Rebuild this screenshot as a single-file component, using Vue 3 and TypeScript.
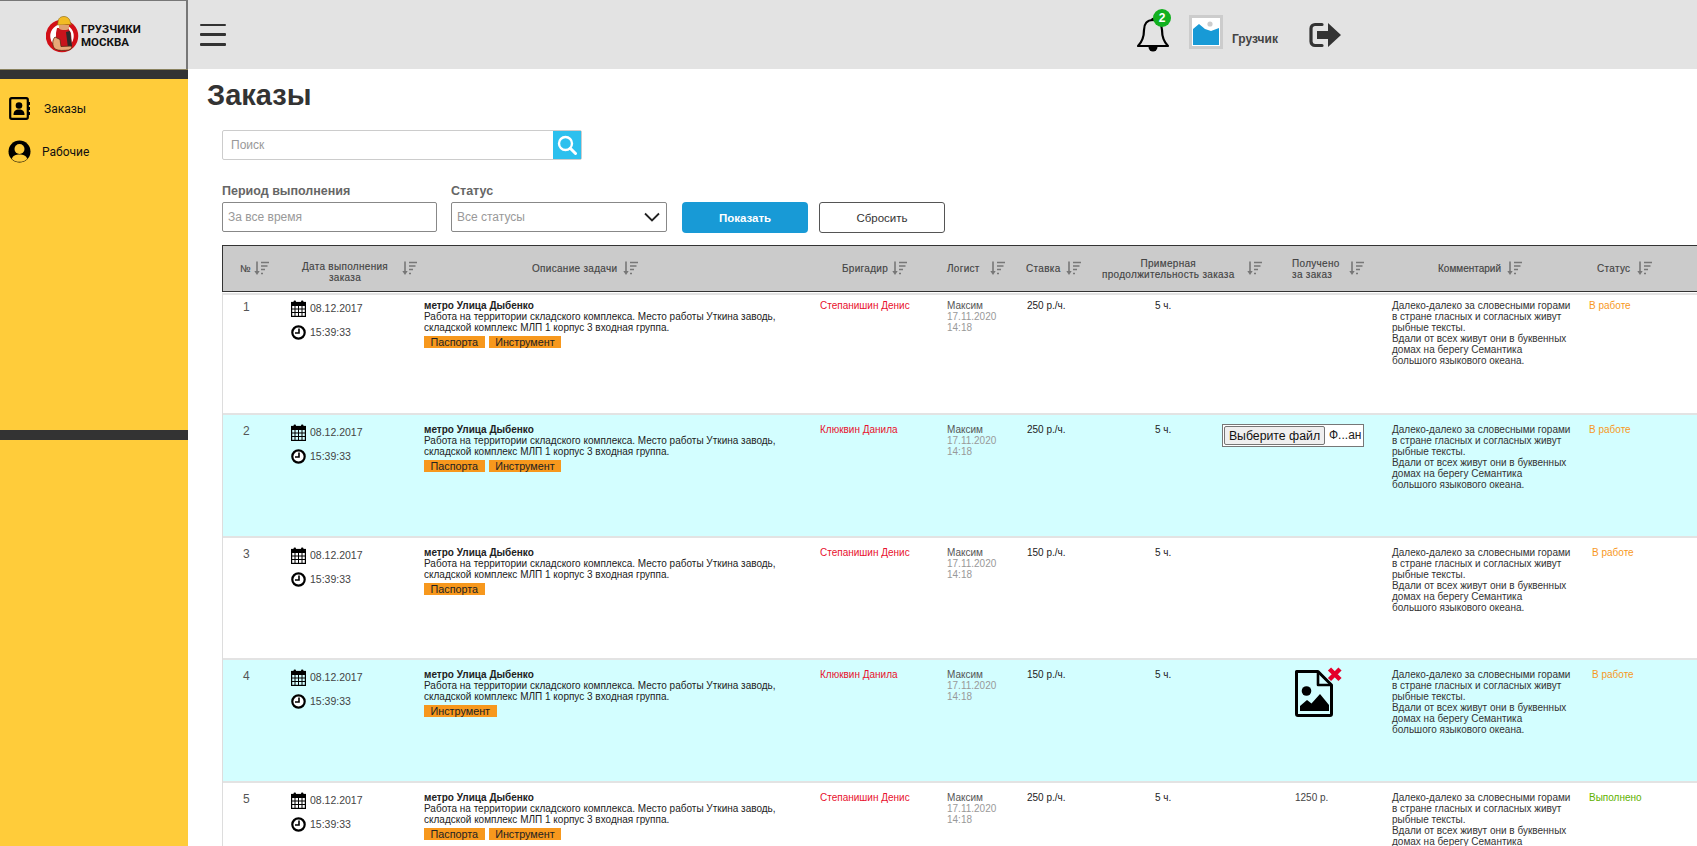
<script setup lang="ts">
interface Row {
  n: number
  tags: string[]
  boss: string
  rate: string
  dur: string
  statusText: string
  done: boolean
  shift: boolean
  kind: '' | 'input' | 'file' | 'paid'
}
const rows: Row[] = [
  { n: 1, tags: ['Паспорта', 'Инструмент'], boss: 'Степанишин Денис', rate: '250 р./ч.', dur: '5 ч.', statusText: 'В работе', done: false, shift: false, kind: '' },
  { n: 2, tags: ['Паспорта', 'Инструмент'], boss: 'Клюквин Данила', rate: '250 р./ч.', dur: '5 ч.', statusText: 'В работе', done: false, shift: false, kind: 'input' },
  { n: 3, tags: ['Паспорта'], boss: 'Степанишин Денис', rate: '150 р./ч.', dur: '5 ч.', statusText: 'В работе', done: false, shift: true, kind: '' },
  { n: 4, tags: ['Инструмент'], boss: 'Клюквин Данила', rate: '150 р./ч.', dur: '5 ч.', statusText: 'В работе', done: false, shift: true, kind: 'file' },
  { n: 5, tags: ['Паспорта', 'Инструмент'], boss: 'Степанишин Денис', rate: '250 р./ч.', dur: '5 ч.', statusText: 'Выполнено', done: true, shift: false, kind: 'paid' }
]
const heads = [
  { key: 'h-n', label: ['№'] },
  { key: 'h-date', label: ['Дата выполнения', 'заказа'] },
  { key: 'h-desc', label: ['Описание задачи'] },
  { key: 'h-boss', label: ['Бригадир'] },
  { key: 'h-log', label: ['Логист'] },
  { key: 'h-rate', label: ['Ставка'] },
  { key: 'h-dur', label: ['Примерная', 'продолжительность заказа'] },
  { key: 'h-got', label: ['Получено', 'за заказ'] },
  { key: 'h-com', label: ['Комментарий'] },
  { key: 'h-st', label: ['Статус'] }
]
const comment = [
  'Далеко-далеко за словесными горами',
  'в стране гласных и согласных живут',
  'рыбные тексты.',
  'Вдали от всех живут они в буквенных',
  'домах на берегу Семантика',
  'большого языкового океана.'
]
</script>

<template>
  <div class="page">
    <header class="top">
      <div class="logo">
        <svg class="logo-mark" viewBox="0 0 34 38" width="34" height="38">
          <circle cx="16" cy="21" r="14" fill="#fff" stroke="#d20f17" stroke-width="4.500" />
          <path d="M11 13h11l3 5 1 13-3 2H13l-3-4 0-11z" fill="#c8141c" />
          <path d="M20 17l4-1 2 15-4 2z" fill="#2b2b2b" />
          <path d="M12 7.500C12 3 15 1.500 18 1.500s6 2 6.500 6.500l1 1.500-14 .5z" fill="#f2bb24" stroke="#8a6510" stroke-width=".6" />
          <path d="M13 10h10v3.500c-1 2-8 2-10 0z" fill="#e0a070" />
          <path d="M9 22c-3 3-3 9 0 12 4 2 9 1.500 14 1l3-2-1-2-10 .5-1-7z" fill="#e7a878" stroke="#5a2a12" stroke-width=".8" />
        </svg>
        <div class="logo-text"><span>ГРУЗЧИКИ</span><span>МОСКВА</span></div>
      </div>
      <button class="burger" aria-label="Меню"><i></i><i></i><i></i></button>
      <div class="top-right">
        <div class="bell">
          <svg viewBox="0 0 34 36" width="34" height="36">
            <path d="M17 4c-6 0-9 4-9 10 0 8-2 12-6 16h30c-4-4-6-8-6-16 0-6-3-10-9-10z" fill="none" stroke="#000" stroke-width="2.200" stroke-linejoin="round" />
            <circle cx="17" cy="3.500" r="1.800" fill="#000" />
            <path d="M12.500 31a4.500 4.500 0 0 0 9 0z" fill="#000" />
          </svg>
          <span class="badge">2</span>
        </div>
        <div class="avatar">
          <svg viewBox="0 0 28 28" width="28" height="28">
            <rect width="28" height="28" fill="#fff" />
            <circle cx="18" cy="6" r="2.600" fill="#ccc" />
            <path d="M1 11l6-5 6 5 6 2 8-3v17H1z" fill="#189ad6" />
          </svg>
        </div>
        <span class="who">Грузчик</span>
        <svg class="exit" viewBox="0 0 33 26" width="33" height="26">
          <path d="M13 2.500H6a4 4 0 0 0-4 4v13a4 4 0 0 0 4 4h7" fill="none" stroke="#333" stroke-width="3.200" stroke-linecap="round" />
          <path d="M8 9h11V1l13 12-13 12v-8H8z" fill="#333" />
        </svg>
      </div>
    </header>

    <div class="below">
      <aside class="side">
        <div class="strip"></div>
        <nav class="nav">
          <a class="nav-item">
            <svg viewBox="0 0 22 23" width="22" height="23">
              <rect x="1.200" y="1.200" width="17.600" height="20.600" rx="1.500" fill="none" stroke="#000" stroke-width="2.200" />
              <path d="M20 5v3M20 10v3M20 15v3" stroke="#000" stroke-width="2" />
              <circle cx="10" cy="8.500" r="3.300" />
              <path d="M4.500 18c0-4 2-5.500 5.500-5.500s5.500 1.500 5.500 5.500z" />
            </svg>
            <span class="nav-a">Заказы</span>
          </a>
          <a class="nav-item nav-item-2">
            <svg viewBox="0 0 23 23" width="23" height="23">
              <circle cx="11.500" cy="11.500" r="11" />
              <circle cx="11.500" cy="9" r="5" fill="#ffcc3a" />
              <path d="M3.800 19c1-3.500 4-4.500 7.700-4.500s6.700 1 7.700 4.500c-2 2-4.700 2.800-7.700 2.800S5.800 21 3.800 19z" fill="#ffcc3a" />
            </svg>
            <span class="nav-b">Рабочие</span>
          </a>
        </nav>
        <div class="strip strip-2"></div>
      </aside>

      <main class="content">
        <h1 class="title">Заказы</h1>
        <div class="search">
          <input class="search-in" placeholder="Поиск" />
          <button class="search-btn" aria-label="Найти">
            <svg viewBox="0 0 20 20" width="20" height="20">
              <circle cx="8.500" cy="8.500" r="6.500" fill="none" stroke="#fff" stroke-width="2.400" />
              <path d="M13.500 13.500l5 5" stroke="#fff" stroke-width="3" stroke-linecap="round" />
            </svg>
          </button>
        </div>
        <div class="filters">
          <label class="field f-period">
            <span class="f-label">Период выполнения</span>
            <input class="f-in" placeholder="За все время" />
          </label>
          <label class="field f-status">
            <span class="f-label">Статус</span>
            <span class="f-in f-sel">Все статусы
              <svg viewBox="0 0 16 10" width="16" height="10"><path d="M1 1.500l7 7 7-7" fill="none" stroke="#222" stroke-width="1.800" /></svg>
            </span>
          </label>
          <button class="btn-show">Показать</button>
          <button class="btn-reset">Сбросить</button>
        </div>

        <section class="table">
          <div class="thead">
            <div v-for="h in heads" :key="h.key" class="th" :class="h.key">
              <div class="th-text"><div v-for="l in h.label" :key="l">{{ l }}</div></div>
              <svg class="sort" viewBox="0 0 15 15" width="15" height="15">
                <path d="M3 0.500v11" stroke="#777" stroke-width="1.600" />
                <path d="M0.300 10h5.400L3 14z" fill="#777" />
                <path d="M7 1.500h8M7 5h6.500M7 8.500h4M7 12.500h2" stroke="#777" stroke-width="1.500" />
              </svg>
            </div>
          </div>
          <div class="rows">
            <article v-for="r in rows" :key="r.n" class="row" :class="{ alt: r.n % 2 === 0 }">
              <div class="c-n">{{ r.n }}</div>
              <div class="c-date">
                <div class="stamp">
                  <svg viewBox="0 0 15 17" width="15" height="17">
                    <rect x=".6" y="2.500" width="13.800" height="13.900" fill="none" stroke="#000" stroke-width="1.200" />
                    <rect x=".6" y="2.500" width="13.800" height="3.500" />
                    <path d="M.6 9h13.800M.6 12.500h13.800M4 6v10M7.500 6v10M11 6v10" stroke="#000" stroke-width="1" />
                    <rect x="2.600" y=".4" width="2.400" height="4" rx="1" />
                    <rect x="10" y=".4" width="2.400" height="4" rx="1" />
                  </svg>
                  <span>08.12.2017</span>
                </div>
                <div class="stamp stamp-2">
                  <svg viewBox="0 0 15 15" width="15" height="15">
                    <circle cx="7.500" cy="7.500" r="6.200" fill="#fff" stroke="#000" stroke-width="2.200" />
                    <path d="M8 3.500v4.500H4" fill="none" stroke="#000" stroke-width="1.600" />
                  </svg>
                  <span>15:39:33</span>
                </div>
              </div>
              <div class="c-desc">
                <div class="d-title">метро Улица Дыбенко</div>
                <div>Работа на территории складского комплекса. Место работы Уткина заводь,</div>
                <div>складской комплекс МЛП 1 корпус 3 входная группа.</div>
                <div class="tags"><span v-for="t in r.tags" :key="t" class="tag">{{ t }}</span></div>
              </div>
              <div class="c-boss">{{ r.boss }}</div>
              <div class="c-log">Максим<div class="muted">17.11.2020</div><div class="muted">14:18</div></div>
              <div class="c-rate">{{ r.rate }}</div>
              <div class="c-dur">{{ r.dur }}</div>
              <div class="c-got">
                <div v-if="r.kind === 'input'" class="file-in">
                  <button class="file-btn">Выберите файл</button><span>Ф...ан</span>
                </div>
                <div v-else-if="r.kind === 'file'" class="file-ic">
                  <svg viewBox="0 0 54 54" width="54" height="54">
                    <path d="M6.500 6.500h21.500l13.500 13.500v29a1.500 1.500 0 0 1-1.500 1.500H8a1.500 1.500 0 0 1-1.500-1.500z" fill="none" stroke="#000" stroke-width="3" stroke-linejoin="round" />
                    <path d="M28 6.500v13.500h13.500" fill="none" stroke="#000" stroke-width="2.600" stroke-linejoin="round" />
                    <circle cx="16.500" cy="26" r="4.800" />
                    <path d="M10 46v-5l7-6 4.500 3.500L30 29l9 11v6z" />
                    <path d="M39.500 4l10.500 10.500M50 4L39.500 14.500" stroke="#e4002b" stroke-width="4.500" />
                  </svg>
                </div>
                <div v-else-if="r.kind === 'paid'" class="paid">1250 р.</div>
              </div>
              <div class="c-com"><div v-for="l in comment" :key="l">{{ l }}</div></div>
              <div class="c-st" :class="{ done: r.done, shift: r.shift }">{{ r.statusText }}</div>
            </article>
          </div>
        </section>
      </main>
    </div>
  </div>
</template>

<style>
html, body { margin: 0; height: 100%; overflow: hidden; background: #fff; }
</style>

<style scoped>
.page { width: 1697px; height: 846px; overflow: hidden; display: flex; flex-direction: column; font-family: "Liberation Sans", Arial, sans-serif; color: #222; }
.top { height: 69px; flex: none; background: #e3e3e3; display: flex; align-items: center; }
.logo { width: 188px; height: 69px; box-sizing: border-box; border-top: 1px solid #777; border-right: 2px solid #777; display: flex; align-items: center; padding-left: 46px; gap: 1px; }
.logo-mark { flex: none; margin-top: -2px; }
.logo-text { display: flex; flex-direction: column; font: 700 11.500px/13px Roboto, sans-serif; color: #111; margin-top: 1px; }
.burger { width: 26px; height: 22px; margin-left: 12px; padding: 0; border: 0; background: none; display: flex; flex-direction: column; justify-content: space-between; }
.burger i { display: block; height: 2.500px; background: #333; border-radius: 1px; }
.top-right { display: flex; align-items: center; margin-left: 910px; height: 69px; }
.bell { width: 34px; height: 36px; position: relative; margin-top: -2px; }
.bell svg { display: block; }
.badge { position: absolute; left: 17px; top: -7px; width: 18px; height: 18px; border-radius: 50%; background: #12b01f; color: #fff; font: 700 12px/18px "Liberation Sans", sans-serif; text-align: center; }
.avatar { width: 28px; height: 28px; border: 3px solid #ccc; margin-left: 19px; margin-top: -5px; }
.avatar svg { display: block; }
.who { font-size: 12px; font-weight: 700; color: #444; margin-left: 9px; margin-top: 8px; }
.exit { margin-left: 31px; margin-top: 1px; }

.below { flex: 1; display: flex; min-height: 0; }
.side { width: 188px; flex: none; background: #ffcc3a; }
.strip { height: 10px; background: #333; border-top: 1px solid #8a8260; box-sizing: border-box; }
.strip-2 { margin-top: 267px; border-top: 0; }
.nav { padding: 18px 0 0 9px; }
.nav-item { display: flex; align-items: center; font: 400 12px/14px Roboto, sans-serif; color: #111; }
.nav-item svg { flex: none; }
.nav-a { margin-left: 13px; }
.nav-item-2 { margin-top: 20px; margin-left: -1px; }
.nav-b { margin-left: 11px; }
.content { flex: 1; min-width: 0; }
.title { margin: 9px 0 0 19px; font-size: 29px; line-height: 34px; font-weight: 700; color: #333; }
.search { display: flex; width: 360px; height: 30px; margin: 18px 0 0 34px; border: 1px solid #ccc; border-radius: 2px; box-sizing: border-box; }
.search-in { flex: 1; min-width: 0; border: 0; outline: 0; padding: 0 8px; font: 12px "Liberation Sans", sans-serif; background: none; }
.search-in::placeholder { color: #999; opacity: 1; }
.search-btn { width: 28px; padding: 0; border: 0; background: #2cc0ee; display: flex; align-items: center; justify-content: center; }
.filters { display: flex; align-items: flex-end; margin: 23px 0 0 34px; }
.field { display: flex; flex-direction: column; }
.f-period { width: 215px; }
.f-status { width: 216px; margin-left: 14px; }
.f-label { font-size: 12.500px; line-height: 17px; font-weight: 700; color: #666; margin-bottom: 2px; }
.f-in { box-sizing: border-box; height: 30px; width: 100%; border: 1px solid #888; border-radius: 2px; padding: 0 5px; font: 12px "Liberation Sans", sans-serif; outline: 0; background: #fff; color: #999; }
.f-in::placeholder { color: #999; opacity: 1; }
.f-sel { display: flex; align-items: center; justify-content: space-between; padding-right: 6px; }
.btn-show, .btn-reset { height: 31px; width: 126px; box-sizing: border-box; font: 11.500px "Liberation Sans", sans-serif; margin-bottom: -1px; }
.btn-show { margin-left: 15px; background: #189ad6; border: 0; border-radius: 4px; color: #fff; font-weight: 700; }
.btn-reset { margin-left: 11px; background: #fff; border: 1px solid #555; border-radius: 3px; color: #333; }

.table { margin: 13px 0 0 34px; width: 1490px; }
.thead { height: 47px; box-sizing: border-box; background: #cbcbcb; border: 1px solid #333; display: flex; font-size: 10px; line-height: 11px; color: #444; }
.th { display: flex; align-items: center; flex: none; box-sizing: border-box; }
.th-text { text-align: center; letter-spacing: .3px; -webkit-text-stroke: .15px #444; white-space: nowrap; }
.sort { flex: none; }
.h-n { width: 70px; padding-left: 17px; gap: 3px; }
.h-date { width: 210px; padding-left: 6px; gap: 11px; }
.h-date .th-text { width: 92px; padding-top: 6px; }
.h-desc { width: 339px; padding-left: 29px; gap: 6px; }
.h-boss { width: 105px; gap: 4px; }
.h-log { width: 79px; gap: 10px; }
.h-rate { width: 76px; gap: 5px; }
.h-dur { width: 188px; gap: 12px; padding-left: 0; }
.h-got { width: 145px; padding-left: 2px; gap: 9px; }
.h-got .th-text { text-align: left; }
.h-com { width: 160px; gap: 6px; padding-left: 3px; }
.h-com .th-text { letter-spacing: 0; }
.h-st { width: 100px; gap: 7px; padding-left: 2px; }

.rows { border-top: 1px solid #fff; border-left: 1px solid #ddd; }
.row { height: 122.600px; box-sizing: border-box; border-top: 2px solid #e3e3e3; display: grid; grid-template-columns: 69px 132px 396px 127px 80px 103px 92px 170px 197px 1fr; align-items: start; font-size: 10px; line-height: 11px; padding-top: 9px; }
.row:first-child { height: 120px; padding-top: 5px; }
.row.alt { background: #d3feff; }
.c-n { font-size: 12px; line-height: 14px; color: #555; padding-left: 20px; }
.c-date { color: #444; font-size: 10.500px; }
.stamp { display: flex; align-items: center; gap: 4px; margin-left: -1px; }
.stamp-2 { margin-top: 8px; }
.c-boss { color: #e8112d; }
.c-log { color: #555; }
.muted { color: #999; }
.c-dur { padding-left: 25px; }
.tags { display: flex; gap: 4px; margin-top: 3px; }
.tag { background: #f7981d; color: #222; line-height: 12px; height: 12px; padding: 0 6.500px; font-size: 10.800px; }
.d-title { font-weight: 700; }
.c-got { min-height: 1px; }
.paid { padding-left: 73px; color: #444; }
.file-in { display: flex; align-items: center; width: 142px; height: 23px; box-sizing: border-box; background: #fff; border: 1px solid #777; color: #222; overflow: hidden; white-space: nowrap; }
.file-in span { margin-left: 4px; font-size: 12px; }
.file-btn { font: 12.300px "Liberation Sans", sans-serif; height: 19px; width: 101px; margin-left: 1px; padding: 0; background: #efefef; border: 1px solid #767676; border-radius: 2px; color: #111; }
.file-ic { padding-left: 68px; margin-top: -4px; }
.file-ic svg { display: block; }
.c-st { color: #f7981d; }
.c-st.shift { padding-left: 3px; }
.c-st.done { color: #5fb100; }
.c-com { color: #333; }
</style>
